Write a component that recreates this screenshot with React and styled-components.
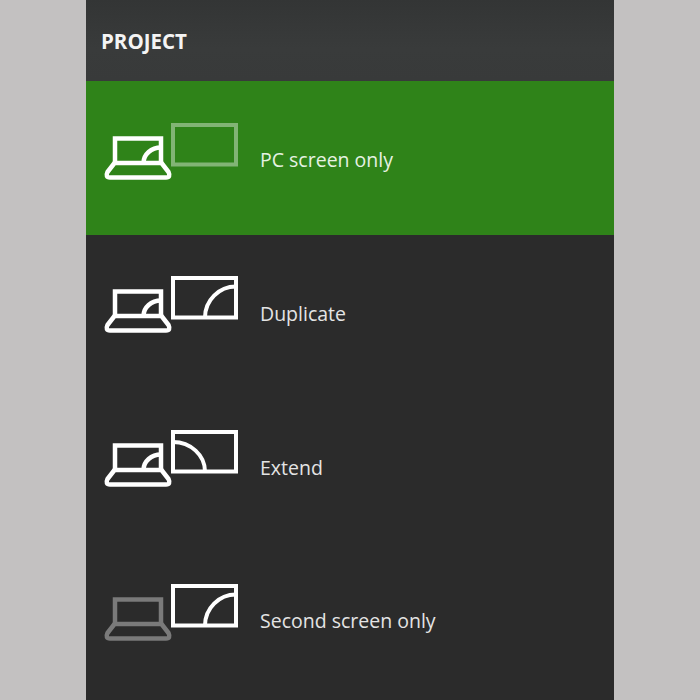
import React from 'react'
import styled, { createGlobalStyle } from 'styled-components'

const GlobalStyle = createGlobalStyle`
  html, body {
    margin: 0;
    padding: 0;
    background: #c3c1c1;
  }
`

const Page = styled.div`
  width: 700px;
  height: 700px;
  display: flex;
  justify-content: center;
  overflow: hidden;
  background: #c3c1c1;
`

const Panel = styled.div`
  width: 528px;
  height: 700px;
  background: #2b2b2b;
  font-family: "Open Sans", "Noto Sans", sans-serif;
  color: #fff;
`

const Header = styled.div`
  height: 81px;
  box-sizing: border-box;
  padding: 29px 0 0 15px;
  background: linear-gradient(#333535, #393b3b 60%, #383a3a);
  font-size: 20.5px;
  line-height: 24px;
  font-weight: 700;
  color: #f4f4f4;
`

const Row = styled.div`
  height: 153.67px;
  display: flex;
  align-items: center;
  gap: 22px;
  padding-left: 19px;
  background: ${(p) => (p.$active ? '#2f8319' : 'transparent')};
`

const Icon = styled.svg`
  width: 134px;
  height: 58px;
  flex: none;
  margin-bottom: 12px;
  margin-right: -1px;
  overflow: visible;
  fill: none;
  stroke: #fff;
  stroke-width: 4;
  stroke-linejoin: miter;
`

const Label = styled.span`
  font-size: 19.5px;
  line-height: 24px;
  margin-top: 5px;
  color: ${(p) => (p.$active ? '#e6f2e2' : '#e4e4e4')};
`

const Laptop = ({ dim }) => (
  <g stroke={dim ? '#7a7a7a' : '#fff'} strokeWidth="4.5">
    <path d="M10 40V15.5H56V40" />
    <path
      d="M9.5 40H56.5L63.5 49Q66 54.5 61 54.5H5Q0 54.5 2.5 49Z"
      strokeLinejoin="round"
    />
    {!dim && <path d="M38.5 40A17.5 15.5 0 0 1 56 24.5" />}
  </g>
)

const Monitor = ({ arc, dim }) => (
  <g opacity={dim ? 0.4 : 1}>
    <rect x="68" y="2" width="63" height="39.5" />
    {arc === 'right' && <path d="M100 41.5A31 31 0 0 1 131 10.5" />}
    {arc === 'left' && <path d="M68 12A32 29.5 0 0 1 100 41.5" />}
  </g>
)

const options = [
  { label: 'PC screen only', active: true, monitorDim: true },
  { label: 'Duplicate', arc: 'right' },
  { label: 'Extend', arc: 'left' },
  { label: 'Second screen only', arc: 'right', laptopDim: true },
]

export default function App() {
  return (
    <Page>
      <GlobalStyle />
      <Panel>
        <Header>PROJECT</Header>
        {options.map((o) => (
          <Row key={o.label} $active={o.active}>
            <Icon viewBox="0 0 134 58">
              <Laptop dim={o.laptopDim} />
              <Monitor arc={o.arc} dim={o.monitorDim} />
            </Icon>
            <Label $active={o.active}>{o.label}</Label>
          </Row>
        ))}
      </Panel>
    </Page>
  )
}
